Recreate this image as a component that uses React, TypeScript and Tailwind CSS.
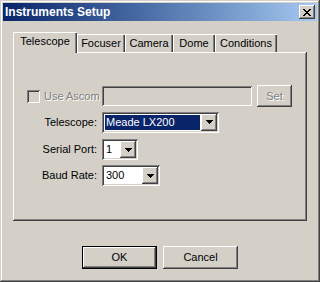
import React from "react";

const raised =
  "shadow-[inset_-1px_-1px_#404040,inset_1px_1px_#ffffff,inset_-2px_-2px_#808080,inset_2px_2px_#d4d0c8]";
const sunken =
  "shadow-[inset_1px_1px_#808080,inset_-1px_-1px_#ffffff,inset_2px_2px_#404040,inset_-2px_-2px_#d4d0c8]";

const Arrow = () => (
  <svg width="7" height="4" viewBox="0 0 7 4" shapeRendering="crispEdges">
    <path d="M0 0h7v1H0zM1 1h5v1H1zM2 2h3v1H2zM3 3h1v1H3z" fill="#000" />
  </svg>
);

const Combo = ({
  value,
  width,
  selected,
}: {
  value: string;
  width: string;
  selected?: boolean;
}) => (
  <div className={`${width} h-[21px] bg-white p-[2px] flex ${sunken}`}>
    <div className="flex-1 p-[1px] flex">
      <div
        className={`flex-1 flex items-center pl-[1px] ${
          selected ? "bg-[#0a246a] text-white" : "text-black"
        }`}
      >
        {value}
      </div>
    </div>
    <div
      className={`w-[16px] h-full bg-[#d4d0c8] flex items-center justify-center ${raised}`}
    >
      <Arrow />
    </div>
  </div>
);

const tabs = [
  { name: "Focuser", w: "w-[48px]" },
  { name: "Camera", w: "w-[48px]" },
  { name: "Dome", w: "w-[42px]" },
  { name: "Conditions", w: "w-[62px]" },
];

export default function App() {
  return (
    <div
      className="w-[320px] h-[282px] bg-[#d4d0c8] p-[3px] flex flex-col text-[11px] text-black font-['Liberation_Sans',Arial,sans-serif] shadow-[inset_-1px_-1px_#404040,inset_1px_1px_#d4d0c8,inset_-2px_-2px_#808080,inset_2px_2px_#ffffff]"
    >
      {/* Title bar */}
      <div className="h-[18px] bg-linear-to-r from-[#0a246a] to-[#a6caf0] flex items-center justify-between pl-[2px] pr-[2px]">
        <span className="text-white font-bold text-[12px] leading-none">
          Instruments Setup
        </span>
        <div
          className={`w-[16px] h-[14px] bg-[#d4d0c8] flex items-center justify-center ${raised}`}
        >
          <svg width="8" height="7" viewBox="0 0 8 7" shapeRendering="crispEdges">
            <path
              d="M0 0h2v1H0zM6 0h2v1H6zM1 1h2v1H1zM5 1h2v1H5zM2 2h4v1H2zM3 3h2v1H3zM2 4h4v1H2zM1 5h2v1H1zM5 5h2v1H5zM0 6h2v1H0zM6 6h2v1H6z"
              fill="#000"
            />
          </svg>
        </div>
      </div>

      {/* Tab control */}
      <div className="px-[10px] pt-[11px]">
        <div className="flex items-end h-[20px]">
          <div className="w-[64px] h-[21px] mb-[-1px] relative z-10 bg-[#d4d0c8] flex items-center justify-center pb-[2px] shadow-[inset_1px_1px_#ffffff,inset_-1px_0_#404040,inset_-2px_0_#808080]">
            Telescope
          </div>
          {tabs.map((t) => (
            <div
              key={t.name}
              className={`${t.w} h-[18px] flex items-center justify-center shadow-[inset_1px_1px_#ffffff,inset_-1px_0_#404040,inset_-2px_0_#808080]`}
            >
              {t.name}
            </div>
          ))}
        </div>
        <div className="h-[169px] pt-[33px] pl-[14px] shadow-[inset_-1px_-1px_#404040,inset_1px_1px_#ffffff,inset_-2px_-2px_#808080]">
          <div className="flex items-center h-[22px]">
            <div className="w-[71px] flex items-center gap-[4px] whitespace-nowrap">
              <div className={`w-[13px] h-[13px] shrink-0 bg-[#d4d0c8] ${sunken}`} />
              <span className="text-[#808080] [text-shadow:1px_1px_#ffffff]">
                Use Ascom
              </span>
            </div>
            <div className={`ml-[4px] w-[150px] h-[20px] bg-[#d4d0c8] ${sunken}`} />
            <div
              className={`ml-[5px] w-[35px] h-[22px] flex items-center justify-center text-[#808080] [text-shadow:1px_1px_#ffffff] ${raised}`}
            >
              Set
            </div>
          </div>
          <div className="flex items-center h-[22px] mt-[4px]">
            <div className="w-[71px] text-right pr-[1px]">Telescope:</div>
            <div className="ml-[4px]">
              <Combo value="Meade LX200" width="w-[117px]" selected />
            </div>
          </div>
          <div className="flex items-center h-[21px] mt-[6px]">
            <div className="w-[71px] text-right pr-[1px]">Serial Port:</div>
            <div className="ml-[4px]">
              <Combo value="1" width="w-[36px]" />
            </div>
          </div>
          <div className="flex items-center h-[21px] mt-[5px]">
            <div className="w-[71px] text-right pr-[1px]">Baud Rate:</div>
            <div className="ml-[4px]">
              <Combo value="300" width="w-[58px]" />
            </div>
          </div>
        </div>
      </div>

      {/* Buttons */}
      <div className="flex justify-center gap-[6px] mt-[25px]">
        <div className="w-[75px] h-[23px] border border-black">
          <div className={`w-full h-full flex items-center justify-center ${raised}`}>
            OK
          </div>
        </div>
        <div
          className={`w-[75px] h-[23px] flex items-center justify-center ${raised}`}
        >
          Cancel
        </div>
      </div>
    </div>
  );
}
